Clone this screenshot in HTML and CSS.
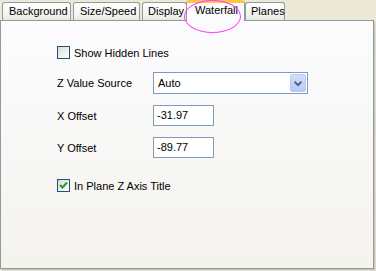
FILE: index.html
```html
<!DOCTYPE html>
<html>
<head>
<meta charset="utf-8">
<link rel="stylesheet" href="styles.css">
</head>
<body>
<div class="window">
  <div class="tabs">
    <div class="tab t-bg">Background</div>
    <div class="tab t-size">Size/Speed</div>
    <div class="tab t-disp">Display</div>
    <div class="tab t-wf sel">Waterfall</div>
    <div class="tab t-pl">Planes</div>
  </div>
  <div class="panel">
    <div class="row r-hidden">
      <span class="cb"></span><span class="cb-label">Show Hidden Lines</span>
    </div>
    <div class="row r-z">
      <span class="label">Z Value Source</span>
      <div class="select">
        <span class="sel-text">Auto</span>
        <span class="arrow">
          <svg width="15" height="19" viewBox="0 0 15 19"><path d="M3.5 8 L7.5 12 L11.5 8" fill="none" stroke="#4d6185" stroke-width="2.2"/></svg>
        </span>
      </div>
    </div>
    <div class="row r-x">
      <span class="label">X Offset</span>
      <div class="input">-31.97</div>
    </div>
    <div class="row r-y">
      <span class="label">Y Offset</span>
      <div class="input">-89.77</div>
    </div>
    <div class="row r-plane">
      <span class="cb checked">
        <svg width="11" height="11" viewBox="0 0 11 11"><path d="M2 5 L4.5 7.5 L9 2.5" fill="none" stroke="#21a121" stroke-width="2"/></svg>
      </span><span class="cb-label">In Plane Z Axis Title</span>
    </div>
  </div>
  <div class="ring"></div>
</div>
</body>
</html>
```
FILE: styles.css
```css
html, body {
  margin: 0;
  padding: 0;
  background: #ece9d8;
}
body {
  font-family: "Liberation Sans", Arial, sans-serif;
  font-size: 11px;
  color: #000;
}
.window {
  position: relative;
  width: 376px;
  height: 271px;
}
.tabs {
  display: flex;
  align-items: flex-end;
  height: 20px;
  padding-left: 2px;
}
.tab {
  box-sizing: border-box;
  height: 18px;
  border: 1px solid #919b9c;
  border-bottom: none;
  border-radius: 3px 3px 0 0;
  background: linear-gradient(#ffffff, #f3f3ef 70%, #e8e7e0);
  margin-right: 2px;
  padding-left: 6px;
  line-height: 17px;
  font-size: 11px;
  white-space: nowrap;
}
.t-bg { width: 69px; }
.t-size { width: 67px; }
.t-disp { width: 45px; margin-right: 0; padding-left: 5px; }
.t-wf { width: 59px; margin-left: -1px; margin-right: 0; }
.t-pl { width: 40px; padding-left: 5px; }
.tab.sel {
  position: relative;
  z-index: 2;
  height: 21px;
  margin-bottom: -1px;
  border-top: 3px solid #ffc83c;
  border-radius: 3px 3px 0 0;
  background: #fcfcfe;
  line-height: 15px;
  padding-left: 8px;
}
.panel {
  box-sizing: border-box;
  width: 374px;
  height: 249px;
  border: 1px solid #919b9c;
  box-shadow: 1px 1px 0 #c8c6b8, 2px 2px 0 #dedcce;
  background: linear-gradient(#fcfcfe, #f4f3ee);
  padding-left: 56px;
  display: flex;
  flex-direction: column;
}
.row {
  display: flex;
  align-items: center;
}
.r-hidden { margin-top: 25px; height: 13px; }
.r-z { margin-top: 13px; height: 22px; }
.r-x { margin-top: 11px; height: 21px; }
.r-y { margin-top: 11px; height: 21px; }
.r-plane { margin-top: 21px; height: 13px; }
.cb {
  box-sizing: border-box;
  width: 13px;
  height: 13px;
  border: 1px solid #1c5180;
  background: linear-gradient(135deg, #dcdcd4, #f5f5f2 70%, #ffffff);
  display: flex;
  align-items: center;
  justify-content: center;
  flex: none;
}
.cb-label {
  margin-left: 4px;
  font-size: 11px;
}
.label {
  width: 96px;
  font-size: 11px;
}
.select {
  box-sizing: border-box;
  width: 155px;
  height: 22px;
  border: 1px solid #7f9db9;
  background: #fff;
  display: flex;
  align-items: center;
  justify-content: space-between;
  padding: 1px;
}
.sel-text {
  padding-left: 3px;
  font-size: 11px;
}
.arrow {
  box-sizing: border-box;
  width: 16px;
  height: 18px;
  border: 1px solid #b9cbf3;
  border-radius: 2px;
  background: linear-gradient(#d2defc, #b7c9f7);
  display: flex;
  align-items: center;
  justify-content: center;
}
.arrow svg { width: 14px; height: 16px; }
.input {
  box-sizing: border-box;
  width: 61px;
  height: 21px;
  border: 1px solid #7f9db9;
  background: #fff;
  padding-left: 3px;
  line-height: 19px;
  font-size: 11px;
}
.ring {
  position: absolute;
  left: 184px;
  top: 0px;
  width: 57px;
  height: 33px;
  box-sizing: border-box;
  border: 1.5px solid #ff3cff;
  border-radius: 50%;
  z-index: 5;
}
```
